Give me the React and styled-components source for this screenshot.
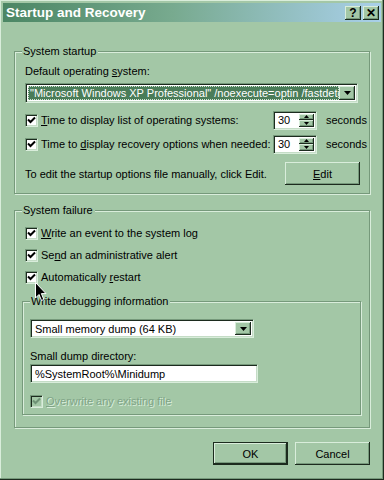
import React from 'react';
import styled, { createGlobalStyle } from 'styled-components';

const Global = createGlobalStyle`
    body {
        margin: 0;
        font-family: "Liberation Sans", Tahoma, sans-serif;
        font-size: 11px;
        color: #000;
        background: #a3c7a6;
    }
`;

const face = '#a3c7a6';
const light = '#d9eddb';
const shadow = '#76997b';
const dark = '#1c2b1e';

const Window = styled.div`
    position: relative;
    width: 384px;
    height: 480px;
    box-sizing: border-box;
    padding: 3px;
    background: ${face};
    box-shadow: inset -1px -1px 0 ${dark}, inset -2px -2px 0 ${shadow}, inset 1px 1px 0 ${light};
    display: flex;
    flex-direction: column;
`;

const TitleBar = styled.div`
    height: 19px;
    display: flex;
    align-items: center;
    padding: 0 2px 0 3px;
    background: linear-gradient(to right, #4b8664 0%, #78aa8f 45%, #a9d0ea 100%);
`;

const Title = styled.span`
    flex: 1;
    color: #fff;
    font-weight: bold;
    font-size: 13.5px;
`;

const TitleButton = styled.span`
    width: 16px;
    height: 14px;
    margin-left: 2px;
    box-sizing: border-box;
    background: ${face};
    box-shadow: inset -1px -1px 0 ${dark}, inset 1px 1px 0 ${light}, inset -2px -2px 0 ${shadow};
    display: flex;
    align-items: center;
    justify-content: center;
    font-weight: bold;
    font-size: 12px;
    line-height: 1;
`;

const Body = styled.div`
    padding: 29px 11px 0 11px;
    display: flex;
    flex-direction: column;
`;

const Group = styled.div`
    position: relative;
    margin-top: ${p => p.$top || 0}px;
    padding: ${p => p.$pad};
    border: 1px solid ${shadow};
    box-shadow: inset 1px 1px 0 ${light}, 1px 1px 0 ${light};
    display: flex;
    flex-direction: column;
`;

const Caption = styled.span`
    position: absolute;
    top: -7px;
    left: ${p => p.$left || 7}px;
    padding: 0 2px 0 1px;
    line-height: 13px;
    background: ${face};
`;

const Label = styled.div`
    height: 13px;
    line-height: 13px;
    margin-top: ${p => p.$top || 0}px;
`;

const Key = styled.span`
    text-decoration: underline;
`;

const Sunken = styled.div`
    box-sizing: border-box;
    height: ${p => p.$h || 20}px;
    width: ${p => p.$w}px;
    margin-top: ${p => p.$top || 0}px;
    flex-shrink: 0;
    background: #fff;
    border: 1px solid;
    border-color: ${shadow} ${light} ${light} ${shadow};
    box-shadow: inset 1px 1px 0 ${dark}, inset -1px -1px 0 #c4dcc6;
    display: flex;
    align-items: center;
    padding: 2px;
`;

const ComboText = styled.span`
    flex: 1;
    align-self: stretch;
    display: flex;
    align-items: center;
    padding-left: 2px;
    white-space: nowrap;
    overflow: hidden;
    background: ${p => p.$selected ? '#4a7c58' : 'transparent'};
    color: ${p => p.$selected ? '#fff' : '#000'};
    outline: ${p => p.$selected ? '1px dotted #d0e6d2' : 'none'};
    outline-offset: -1px;
`;

const ArrowButton = styled.span`
    width: 16px;
    align-self: stretch;
    box-sizing: border-box;
    background: ${face};
    box-shadow: inset -1px -1px 0 ${dark}, inset 1px 1px 0 ${light}, inset -2px -2px 0 ${shadow};
    display: flex;
    align-items: center;
    justify-content: center;
    flex-shrink: 0;
`;

const SpinButtons = styled.span`
    width: 15px;
    align-self: stretch;
    display: flex;
    flex-direction: column;
`;

const SpinPart = styled(ArrowButton)`
    width: 15px;
    flex: 1;
`;

const Row = styled.div`
    height: ${p => p.$h || 20}px;
    display: flex;
    align-items: center;
    margin-top: ${p => p.$top || 0}px;
    padding-left: ${p => p.$indent || 0}px;
`;

const Box = styled.span`
    width: 13px;
    height: 13px;
    box-sizing: border-box;
    flex-shrink: 0;
    background: ${p => p.$disabled ? face : '#fff'};
    border: 1px solid;
    border-color: ${shadow} ${light} ${light} ${shadow};
    box-shadow: inset 1px 1px 0 ${dark}, inset -1px -1px 0 #c4dcc6;
    display: flex;
    align-items: center;
    justify-content: center;
    margin-right: 3px;
`;

const RowText = styled.span`
    white-space: nowrap;
    flex: ${p => p.$grow ? 1 : 'none'};
    width: ${p => p.$w ? `${p.$w}px` : 'auto'};
    color: ${p => p.$disabled ? '#7fa486' : 'inherit'};
    text-shadow: ${p => p.$disabled ? `1px 1px 0 ${light}` : 'none'};
`;

const Seconds = styled.span`
    margin-left: 9px;
`;

const Button = styled.span`
    width: 75px;
    height: 23px;
    box-sizing: border-box;
    flex-shrink: 0;
    background: ${face};
    border: ${p => p.$default ? `1px solid ${dark}` : 'none'};
    box-shadow: inset -1px -1px 0 ${dark}, inset 1px 1px 0 ${light}, inset -2px -2px 0 ${shadow};
    display: flex;
    align-items: center;
    justify-content: center;
`;

const ButtonRow = styled.div`
    display: flex;
    justify-content: flex-end;
    gap: 7px;
    margin-top: ${p => p.$top || 0}px;
`;

const Cursor = styled.svg`
    position: absolute;
    left: 35px;
    top: 282px;
`;

const Check = ({ disabled }) => (
    <svg width="9" height="9" viewBox="0 0 9 9">
        <path d="M1 3.5 L3.5 6 L8 1.5" fill="none" stroke={disabled ? '#6e9275' : '#000'} strokeWidth="2" />
    </svg>
);

const Down = () => (
    <svg width="7" height="4" viewBox="0 0 7 4">
        <path d="M0 0 H7 L3.5 4 Z" fill="#000" />
    </svg>
);

const Up = () => (
    <svg width="5" height="3" viewBox="0 0 5 3">
        <path d="M0 3 H5 L2.5 0 Z" fill="#000" />
    </svg>
);

const SmallDown = () => (
    <svg width="5" height="3" viewBox="0 0 5 3">
        <path d="M0 0 H5 L2.5 3 Z" fill="#000" />
    </svg>
);

const Spin = ({ value }) => (
    <Sunken $w={44} $h={19}>
        <ComboText>{value}</ComboText>
        <SpinButtons>
            <SpinPart><Up /></SpinPart>
            <SpinPart><SmallDown /></SpinPart>
        </SpinButtons>
    </Sunken>
);

const CheckRow = ({ children, disabled, top, indent }) => (
    <Row $top={top} $indent={indent}>
        <Box $disabled={disabled}><Check disabled={disabled} /></Box>
        <RowText $disabled={disabled}>{children}</RowText>
    </Row>
);

export default function App() {
    return (
        <>
            <Global />
            <Window>
                <TitleBar>
                    <Title>Startup and Recovery</Title>
                    <TitleButton>?</TitleButton>
                    <TitleButton>✕</TitleButton>
                </TitleBar>
                <Body>
                    <Group $pad="13px 9px 8px 10px">
                        <Caption>System startup</Caption>
                        <Label>Default operating <Key>s</Key>ystem:</Label>
                        <Sunken $w={333} $top={5}>
                            <ComboText $selected>"Microsoft Windows XP Professional" /noexecute=optin /fastdetect</ComboText>
                            <ArrowButton><Down /></ArrowButton>
                        </Sunken>
                        <Row $top={7}>
                            <Box><Check /></Box>
                            <RowText $w={232}><Key>T</Key>ime to display list of operating systems:</RowText>
                            <Spin value="30" />
                            <Seconds>seconds</Seconds>
                        </Row>
                        <Row $top={4}>
                            <Box><Check /></Box>
                            <RowText $w={232}>Time to <Key>d</Key>isplay recovery options when needed:</RowText>
                            <Spin value="30" />
                            <Seconds>seconds</Seconds>
                        </Row>
                        <Row $top={8} $h={23}>
                            <RowText $grow>To edit the startup options file manually, click Edit.</RowText>
                            <Button><Key>E</Key>dit</Button>
                        </Row>
                    </Group>
                    <Group $top={16} $pad="12px 8px 12px 7px">
                        <Caption>System failure</Caption>
                        <CheckRow indent={3}><Key>W</Key>rite an event to the system log</CheckRow>
                        <CheckRow indent={3} top={2}>Se<Key>n</Key>d an administrative alert</CheckRow>
                        <CheckRow indent={3} top={2}>Automatically <Key>r</Key>estart</CheckRow>
                        <Group $top={14} $pad="17px 7px 3px 7px">
                            <Caption>Write debugging information</Caption>
                            <Sunken $w={224} $h={19}>
                                <ComboText>Small memory dump (64 KB)</ComboText>
                                <ArrowButton><Down /></ArrowButton>
                            </Sunken>
                            <Label $top={12}>Small dump directory:</Label>
                            <Sunken $w={228} $h={19} $top={1}>
                                <ComboText>%SystemRoot%\Minidump</ComboText>
                            </Sunken>
                            <CheckRow disabled top={8}><Key>O</Key>verwrite any existing file</CheckRow>
                        </Group>
                    </Group>
                    <ButtonRow $top={14}>
                        <Button $default>OK</Button>
                        <Button>Cancel</Button>
                    </ButtonRow>
                </Body>
                <Cursor width="13" height="20" viewBox="0 0 13 20">
                    <path d="M0.5 0.5 L0.5 16 L4 12.5 L6.5 18.5 L8.8 17.5 L6.4 11.6 L11 11.6 Z" fill="#000" stroke="#fff" strokeWidth="1" />
                </Cursor>
            </Window>
        </>
    );
}
